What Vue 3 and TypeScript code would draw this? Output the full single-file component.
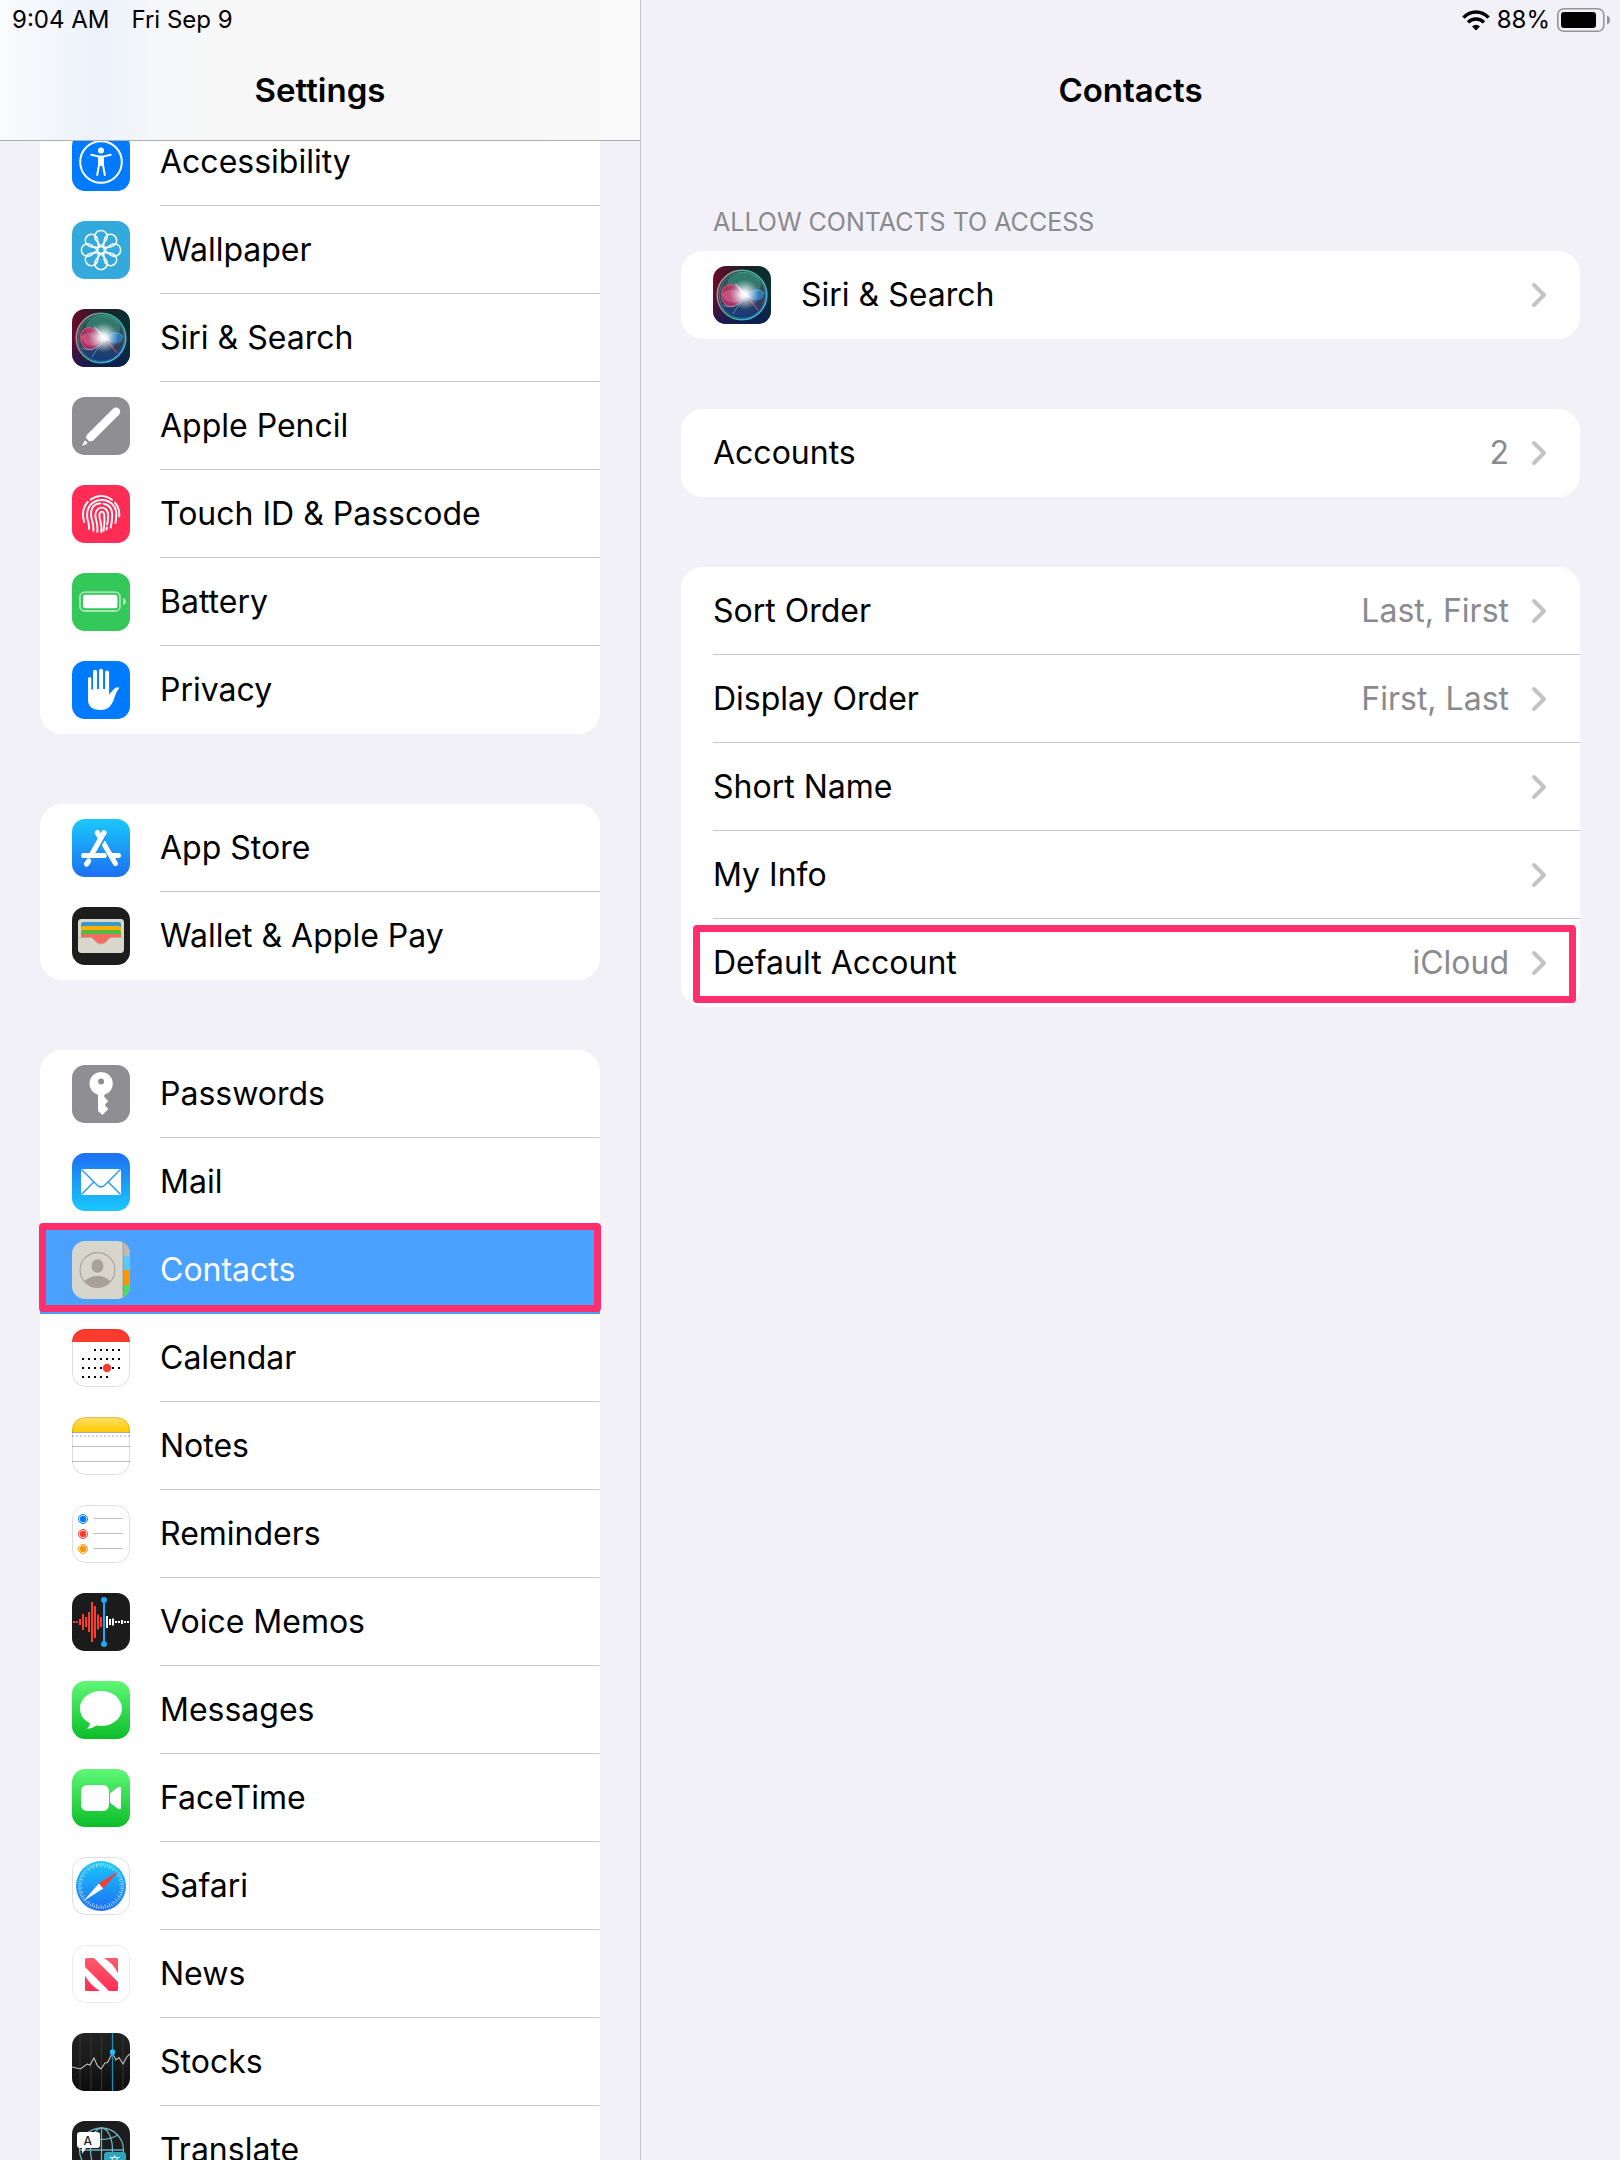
<script setup lang="ts">
interface SidebarItem {
  label: string
  icon: string
  selected?: boolean
}

interface DetailItem {
  label: string
  icon?: string
  value?: string
  marked?: boolean
}

interface DetailGroup {
  title?: string
  items: DetailItem[]
}

const sidebarGroups: SidebarItem[][] = [
  [
    { label: 'Accessibility', icon: 'accessibility' },
    { label: 'Wallpaper', icon: 'wallpaper' },
    { label: 'Siri & Search', icon: 'siri' },
    { label: 'Apple Pencil', icon: 'pencil' },
    { label: 'Touch ID & Passcode', icon: 'touchId' },
    { label: 'Battery', icon: 'battery' },
    { label: 'Privacy', icon: 'privacy' },
  ],
  [
    { label: 'App Store', icon: 'appStore' },
    { label: 'Wallet & Apple Pay', icon: 'wallet' },
  ],
  [
    { label: 'Passwords', icon: 'passwords' },
    { label: 'Mail', icon: 'mail' },
    { label: 'Contacts', icon: 'contacts', selected: true },
    { label: 'Calendar', icon: 'calendar' },
    { label: 'Notes', icon: 'notes' },
    { label: 'Reminders', icon: 'reminders' },
    { label: 'Voice Memos', icon: 'voiceMemos' },
    { label: 'Messages', icon: 'messages' },
    { label: 'FaceTime', icon: 'faceTime' },
    { label: 'Safari', icon: 'safari' },
    { label: 'News', icon: 'news' },
    { label: 'Stocks', icon: 'stocks' },
    { label: 'Translate', icon: 'translate' },
  ],
]

const detailGroups: DetailGroup[] = [
  { title: 'ALLOW CONTACTS TO ACCESS', items: [{ label: 'Siri & Search', icon: 'siri' }] },
  { items: [{ label: 'Accounts', value: '2' }] },
  {
    items: [
      { label: 'Sort Order', value: 'Last, First' },
      { label: 'Display Order', value: 'First, Last' },
      { label: 'Short Name' },
      { label: 'My Info' },
      { label: 'Default Account', value: 'iCloud', marked: true },
    ],
  },
]

const fill = (paint: string): string => `<rect width="58" height="58" fill="${paint}"/>`

const outlined =
  '<rect x=".5" y=".5" width="57" height="57" rx="13" fill="none" stroke="#000" stroke-opacity=".13"/>'

const petals = Array.from(
  { length: 8 },
  (_, i) =>
    `<path d="M29 25.5L24.2 19.5A6.2 6.2 0 1 1 33.8 19.5Z" transform="rotate(${i * 45} 29 29)"/>`,
).join('')

const ticks = Array.from({ length: 60 }, (_, i) => {
  const end = i % 2 ? 8.6 : 10.2
  return `<path d="M29 6V${end}" transform="rotate(${i * 6} 29 29)"/>`
}).join('')

const bar = (x: number, h: number): string =>
  `<rect x="${x - 1}" y="${29 - h / 2}" width="2" height="${h}"/>`

const redBars = [2, 2, 6, 16, 10, 20, 40, 32, 15, 10].map((h, i) => bar(2 + i * 3, h)).join('')
const whiteBars = [12, 6, 7, 2, 2, 4, 2, 2].map((h, i) => bar(35 + i * 3, h)).join('')

const dotRow = (y: number, from: number, to: number): string => {
  let out = ''
  for (let x = from; x <= to; x += 6) out += `<rect x="${x - 1}" y="${y - 1}" width="2" height="2"/>`
  return out
}

const reminder = (y: number, color: string): string =>
  `<circle cx="11" cy="${y}" r="4.5" fill="none" stroke="${color}"/><circle cx="11" cy="${y}" r="3.2" fill="${color}"/><path d="M21.5 ${y - 0.5}H51" stroke="#bdbdbf"/>`

const icons: Record<string, string> = {
  accessibility:
    fill('#007aff') +
    '<circle cx="29" cy="29" r="20.8" fill="none" stroke="#fff" stroke-width="2"/><circle cx="29" cy="17.6" r="3" fill="#fff"/><path d="M19.3 21.8L26 23.4H32L38.7 21.8M27 24.5V32L25.2 42M31 24.5V32L32.8 42" fill="none" stroke="#fff" stroke-width="2" stroke-linecap="round" stroke-linejoin="round"/><path d="M26 23H32V33H26Z" fill="#fff"/>',
  wallpaper:
    fill('#34aadc') +
    `<g fill="none" stroke="#fff" stroke-width="1.5" stroke-linejoin="round">${petals}<circle cx="29" cy="29" r="3.4"/></g>`,
  siri:
    fill('url(#siriBack)') +
    '<rect width="58" height="58" fill="url(#siriLow)"/><circle cx="29" cy="29" r="24.8" fill="url(#siriOrb)"/><ellipse cx="31" cy="19" rx="17" ry="13" fill="#3f9d87" opacity=".5"/><circle cx="29" cy="29" r="24.8" fill="none" stroke="url(#siriRing)" stroke-width="1.5"/><circle cx="29.4" cy="29.4" r="23" fill="none" stroke="#9cc" stroke-opacity=".3"/><path d="M32 29C25 17 12 15 9 25C7 36 14 43 22 40C28 38 30 32 32 29Z" fill="#e02a66" opacity=".68"/><path d="M32 29C25 17 12 15 9 25C7 36 14 43 22 40" fill="none" stroke="#ff5c93" opacity=".8"/><path d="M32 29C24 22 12 23 9 28C13 40 26 39 32 29Z" fill="#ff9fc0" opacity=".3"/><path d="M32 29C38 22 49 22 51 28C50 36 40 37 32 29Z" fill="#2e8be0" opacity=".7"/><path d="M10 39C22 44 28 36 32 29M20 48C24 41 29 34 34 31M34 31C39 22 48 22 51 28" fill="none" stroke="#71c6e8" opacity=".6"/><path d="M34 30L45 44" stroke="#e55d85" stroke-width="1.5" opacity=".5"/><circle cx="31.5" cy="28.5" r="15" fill="url(#siriGlow)"/><path d="M21 16L34 28L39 32L30 30Z" fill="#fff" opacity=".45"/>',
  pencil:
    fill('#8e8e93') +
    '<path d="M44 14.8L19 39.8" stroke="#fff" stroke-width="8.4" stroke-linecap="round"/><path d="M14 41L17.5 44.5L21.5 43.5L15 37Z" fill="#fff"/><path d="M10 49L12.6 43.6Q14.8 44.4 15.6 46.4Z" fill="#fff"/>',
  touchId:
    fill('#ff2d55') +
    '<g fill="none" stroke="#fff" stroke-width="1.9" stroke-linecap="round"><path d="M18.6 14.6Q29 7 40 14.8M15.6 17Q8.6 25 12.2 37M43 17.6Q48 23.5 47.2 31.5"/><path d="M17 44Q17.3 39 15.5 34C11 9 47 9 44.2 32Q44 35 43.5 38"/><path d="M21.3 46C22 40 20 36 19.3 32C18 22 23 18.4 28.4 18.4M31.5 18.7C38 20 40.5 25 40.2 31Q40 38 38.7 42.5"/><path d="M25.3 47C26.2 40 24 36 23.4 31.5C22.5 20 36 19.6 36.2 30.5Q36 36 35.2 39.5M34.9 42.5L34.5 44.5"/><path d="M29.3 47.2C30.3 40 27.8 35 27.4 31C27.2 25.3 32.2 25.6 32.3 30.4Q33 38 31.5 46"/></g>',
  battery:
    fill('#34c759') +
    '<rect x="8" y="19.2" width="40" height="18.8" rx="4.6" fill="none" stroke="#fff" stroke-opacity=".55" stroke-width="1.8"/><rect x="11" y="21.8" width="34.4" height="13.5" rx="2.4" fill="#fff"/><path d="M51 25V32Q54 31 54 28.5T51 25Z" fill="#fff" fill-opacity=".6"/>',
  privacy:
    fill('#007aff') +
    '<path d="M16 39V17.6A1.6 1.6 0 0 1 19.3 17.6V28.5H21V10.8A2 2 0 0 1 25.1 10.8V28H27V9.8A2 2 0 0 1 31.1 9.8V28H33V11.6A2 2 0 0 1 37.1 11.6V33.5L41.5 28.5Q44.5 25.4 47.4 26.8Q44 31 42.6 36C40 45 36 49 28.5 49C20 49 16 45 16 39Z" fill="#fff"/>',
  appStore:
    fill('url(#skyDown)') +
    '<g stroke="#fff" stroke-width="5" stroke-linecap="round" fill="none"><path d="M11.7 36.5H32M41 36.5H46.5M25.4 13.7L43.4 44.6"/></g><path d="M32.2 15.5L19.8 36.5" stroke="#1c94f8" stroke-width="7"/><path d="M12 36.5H32" stroke="#fff" stroke-width="5" stroke-linecap="round"/><path d="M32 13.7L20.3 34.2M16.6 42L14.6 45" stroke="#fff" stroke-width="5.2" stroke-linecap="round"/><path d="M25.4 13.7L28.5 19" stroke="#fff" stroke-width="5" stroke-linecap="round"/>',
  wallet:
    fill('#1d1d1d') +
    '<rect x="6" y="12" width="46" height="34" rx="3.4" fill="#d9d7cc"/><path d="M9 17.5Q9 15 11.5 15H46.5Q49 15 49 17.5V22H9Z" fill="#3a99c9"/><path d="M9 21.5Q9 19 11.5 19H46.5Q49 19 49 21.5V26H9Z" fill="#ffb000"/><path d="M9 25.5Q9 23 11.5 23H46.5Q49 23 49 25.5V30H9Z" fill="#53bb41"/><path d="M9 29.5Q9 27 11.5 27H46.5Q49 27 49 29.5V31H39C36 31 35 37 29 37S22 31 19 31H9Z" fill="#f26d5f"/><path d="M6 30.6H19C22 30.6 23 37 29 37S36 30.6 39 30.6H52" fill="none" stroke="#bbb9ae" stroke-width=".8"/>',
  passwords:
    fill('#8e8e93') +
    '<path d="M29.2 7A11.6 11.6 0 0 1 32.3 29.8V32L36.3 36L32.8 40L36.3 44L30.3 50L26 46V29.8A11.6 11.6 0 0 1 29.2 7Z" fill="#fff"/><circle cx="29.1" cy="16.6" r="3" fill="#8e8e93"/>',
  mail:
    fill('url(#skyUp)') +
    '<rect x="9" y="16" width="40" height="26" rx="1" fill="#fff"/><path d="M9.5 16.5L25.3 32.3Q29 35.6 32.7 32.3L48.5 16.5M9.5 41.5L21.8 29M48.5 41.5L36.2 29" fill="none" stroke="#2a98f4" stroke-width="1.4"/>',
  contacts:
    fill('#d8d6cc') +
    '<rect x="51" width="7" height="15" fill="#bcb9b0"/><rect x="51" y="15" width="7" height="14" fill="#5ac8fa"/><rect x="51" y="29" width="7" height="15" fill="#ff9500"/><rect x="51" y="44" width="7" height="14" fill="#4cd964"/><path d="M51 0V58" stroke="#8c887e" stroke-opacity=".6"/><circle cx="25.5" cy="29" r="17.4" fill="none" stroke="#a8a198" stroke-width="1.1"/><ellipse cx="25.5" cy="25" rx="6" ry="6.8" fill="#a8a198"/><path d="M12.5 40.5Q17 35 25.5 35T38.5 40.5A17.4 17.4 0 0 1 12.5 40.5Z" fill="#a8a198"/>',
  calendar:
    fill('#fff') +
    `<rect width="58" height="13" fill="#ff3b30"/>${dotRow(21, 23, 47)}${dotRow(30, 11, 47)}${dotRow(39, 11, 47)}${dotRow(48, 11, 35)}<circle cx="35" cy="39" r="4.2" fill="#ff3b30"/>${outlined}`,
  notes:
    fill('#fff') +
    '<rect width="58" height="15" fill="url(#noteTop)"/><path d="M0 15.5H58" stroke="#a6a6a6"/><path d="M0 19H58" stroke="#d0d0d0" stroke-width="2" stroke-dasharray="2 2"/><path d="M0 29.5H58M0 44.5H58" stroke="#bdbdbf"/>' +
    outlined,
  reminders:
    fill('#fff') + reminder(14, '#007aff') + reminder(29, '#ff3b30') + reminder(44, '#ff9500') + outlined,
  voiceMemos:
    fill('#1b1b1b') +
    `<g fill="#ff3b30">${redBars}</g><g fill="#fff">${whiteBars}</g><g fill="#1ea7fd"><rect x="31" y="7" width="2" height="44"/><circle cx="32" cy="7" r="3"/><circle cx="32" cy="51" r="3"/></g>`,
  messages:
    fill('url(#greenDown)') +
    '<path d="M29 10C40.6 10 50 17.8 50 27.5S40.6 45 29 45Q26.5 45 24.3 44.6Q20 48 15 47.8Q18 45.5 18 42.3C11.8 39.3 8 33.8 8 27.5C8 17.8 17.4 10 29 10Z" fill="#fff"/>',
  faceTime:
    fill('url(#greenDown)') +
    '<rect x="9" y="16" width="28" height="26" rx="5.8" fill="#fff"/><path d="M38 25.5Q38 24.5 39 23.5L46 18.3Q49 16.8 49 19.5V38.5Q49 41.2 46 39.7L39 34.5Q38 33.5 38 32.5Z" fill="#fff"/>',
  safari:
    fill('#fff') +
    `<circle cx="29" cy="29" r="25" fill="url(#skyDown)"/><g stroke="#fff" stroke-opacity=".75" stroke-width=".8">${ticks}</g><path d="M46.5 14L26.8 26.5L31.2 31.5Z" fill="#ff3b30"/><path d="M11.5 44L26.8 26.5L31.2 31.5Z" fill="#fff"/>${outlined}`,
  news:
    fill('#fff') +
    '<path d="M14 13H22L46 37V45L45 46H37L13 22V14ZM32 13H45L46 14V28.5Q42 19 32 13ZM13 30.5Q18 40 28 46H14L13 45Z" fill="url(#newsRed)"/><rect x=".5" y=".5" width="57" height="57" rx="13" fill="none" stroke="#000" stroke-opacity=".08"/>',
  stocks:
    fill('url(#stockBack)') +
    '<path d="M8 0V58M19 0V58M29.5 0V58M51 0V58" stroke="#343434"/><path d="M0 34L8.5 36L15 31L18 32L22 25L25.5 33L29 36L33 30L35.5 29.5L40.5 20L44 27L47 24.5L51 31L55 23.5L58 21" fill="none" stroke="#c4c4c4" stroke-width="1.1"/><path d="M40.5 0V58" stroke="#1b8dbd" stroke-width="1.3"/><circle cx="40.5" cy="19" r="2.7" fill="#22c3ff"/>',
  translate:
    fill('#1d1d1d') +
    '<g fill="none" stroke="#6ab4c1" stroke-width="1.3"><circle cx="29.5" cy="29" r="22"/><ellipse cx="29.5" cy="29" rx="11" ry="22"/><path d="M29.5 7V51M7.5 29H51.5M13 14Q29.5 23 46 14M13 44Q29.5 35 46 44"/></g><path d="M8 11H25Q28 11 28 14V24Q28 27 25 27H14L10 33V27H8Q5 27 5 24V14Q5 11 8 11Z" fill="#fff"/><text x="15.8" y="23.5" font-size="12" font-weight="500" text-anchor="middle" fill="#1d1d1d">A</text><path d="M35 31H51Q54 31 54 34V44Q54 47 51 47H49V52L44 47H35Q32 47 32 44V34Q32 31 35 31Z" fill="#2ca6bd"/><text x="42.5" y="43.5" font-size="11" text-anchor="middle" fill="#fff">文</text>',
}
</script>

<template>
  <div class="screen">
    <svg class="paints" width="0" height="0" aria-hidden="true">
      <defs>
        <linearGradient id="skyDown" x2="0" y2="1"><stop stop-color="#1ac8fc" /><stop offset="1" stop-color="#1d6ff2" /></linearGradient>
        <linearGradient id="skyUp" x2="0" y2="1"><stop stop-color="#1d6ff2" /><stop offset="1" stop-color="#1ac8fc" /></linearGradient>
        <linearGradient id="greenDown" x2="0" y2="1"><stop stop-color="#5ff777" /><stop offset="1" stop-color="#0bbd29" /></linearGradient>
        <linearGradient id="noteTop" x2="0" y2="1"><stop stop-color="#ffdf67" /><stop offset="1" stop-color="#fecb00" /></linearGradient>
        <linearGradient id="newsRed" x2="0" y2="1"><stop stop-color="#fd5b6c" /><stop offset="1" stop-color="#ff2d55" /></linearGradient>
        <linearGradient id="stockBack" x2="0" y2="1"><stop stop-color="#222" /><stop offset=".6" stop-color="#181818" /><stop offset="1" stop-color="#0c0c0c" /></linearGradient>
        <linearGradient id="siriBack"><stop stop-color="#6d0a2b" /><stop offset=".5" stop-color="#1c2029" /><stop offset="1" stop-color="#06322f" /></linearGradient>
        <linearGradient id="siriLow" x2="0" y2="1"><stop offset=".5" stop-color="#0a1d5c" stop-opacity="0" /><stop offset="1" stop-color="#0a1d5c" stop-opacity=".8" /></linearGradient>
        <linearGradient id="siriOrb" x2="0" y2="1"><stop stop-color="#1c5c50" /><stop offset=".55" stop-color="#3b4356" /><stop offset="1" stop-color="#0d3a82" /></linearGradient>
        <linearGradient id="siriRing" x2="1" y2=".4"><stop stop-color="#e07f96" /><stop offset=".6" stop-color="#2fb791" /><stop offset="1" stop-color="#3fb4e6" /></linearGradient>
        <radialGradient id="siriGlow"><stop stop-color="#fff" /><stop offset=".25" stop-color="#fff" stop-opacity=".85" /><stop offset="1" stop-color="#cfe8f5" stop-opacity="0" /></radialGradient>
      </defs>
    </svg>

    <aside class="sidebar">
      <header class="bar sidebar-bar">
        <div class="status">
          <time>9:04 AM</time>
          <span>Fri Sep 9</span>
        </div>
        <h1>Settings</h1>
      </header>
      <nav class="sidebar-list" aria-label="Settings">
        <ul v-for="(group, g) in sidebarGroups" :key="g" class="card">
          <li v-for="item in group" :key="item.label">
            <a
              href="#"
              class="row"
              :class="{ selected: item.selected }"
              :aria-current="item.selected ? 'page' : undefined"
            >
              <svg class="icon" viewBox="0 0 58 58" aria-hidden="true" v-html="icons[item.icon]" />
              <span class="cell">{{ item.label }}</span>
              <span v-if="item.selected" class="mark" />
            </a>
          </li>
        </ul>
      </nav>
    </aside>

    <main class="detail">
      <header class="bar">
        <div class="status status-right">
          <svg width="28" height="21" viewBox="0 0 28 21" aria-hidden="true">
            <g fill="none" stroke="#000" stroke-width="3.4">
              <path d="M1.4 7.6Q7 2 14 2T26.6 7.6" />
              <path d="M6 12.4Q9.3 9 14 9T22 12.4" />
            </g>
            <path d="M10 16.4Q14 13 18 16.4L14 20.5Z" />
          </svg>
          <span>88%</span>
          <svg width="54" height="24" viewBox="0 0 54 24" aria-hidden="true">
            <rect x=".8" y=".8" width="46" height="22.4" rx="6" fill="none" stroke="#959499" stroke-width="1.6" />
            <rect x="4" y="4" width="35" height="16" rx="3" />
            <path d="M50 7.5V16.5Q53 15.5 53 12T50 7.5Z" fill="#959499" />
          </svg>
        </div>
        <h1>Contacts</h1>
      </header>
      <section v-for="(group, g) in detailGroups" :key="g" class="group">
        <h2 v-if="group.title">{{ group.title }}</h2>
        <ul class="card">
          <li v-for="item in group.items" :key="item.label">
            <a href="#" class="row">
              <svg v-if="item.icon" class="icon" viewBox="0 0 58 58" aria-hidden="true" v-html="icons[item.icon]" />
              <span class="cell">
                <span>{{ item.label }}</span>
                <span class="value">{{ item.value }}</span>
                <svg class="chevron" width="16" height="26" viewBox="0 0 16 26" aria-hidden="true">
                  <path d="M3 3L13 13L3 23" fill="none" stroke="#c4c4c7" stroke-width="4" stroke-linecap="round" stroke-linejoin="round" />
                </svg>
              </span>
              <span v-if="item.marked" class="mark mark-inner" />
            </a>
          </li>
        </ul>
      </section>
    </main>
  </div>
</template>

<style>
body {
  background: #f2f1f7;
}
</style>

<style scoped>
.screen {
  display: grid;
  grid-template-columns: 641px minmax(0, 1fr);
  height: 100vh;
  overflow: hidden;
  background: #f2f1f7;
  color: #000;
  font-family: Inter, 'Noto Sans CJK SC', sans-serif;
  font-size: 32px;
  line-height: 40px;
}

.paints {
  position: absolute;
}

.sidebar {
  display: flex;
  flex-direction: column;
  min-height: 0;
  border-right: 1px solid #c6c5ca;
}

.bar {
  box-sizing: border-box;
  flex: none;
  height: 141px;
}

.sidebar-bar {
  position: relative;
  z-index: 1;
  border-bottom: 1px solid #adacb1;
  background: linear-gradient(90deg, #fafbfd 0, #ecf2fb 100px, #f6f7f9 160px, #f7f7f7 240px, #f7f7f7 500px, #fafafa 640px);
}

.status {
  display: flex;
  align-items: center;
  gap: 22px;
  height: 40px;
  padding: 0 12px;
  font-size: 24px;
  line-height: 40px;
}

.status-right {
  justify-content: flex-end;
  gap: 7px;
  padding: 0 9px;
}

h1 {
  margin: 0;
  padding-top: 30px;
  font-size: 33px;
  font-weight: 600;
  line-height: 40px;
  text-align: center;
}

.sidebar-list {
  display: flex;
  flex: 1;
  flex-direction: column;
  gap: 70px;
  min-height: 0;
  margin-top: -23px;
  padding: 0 40px;
  overflow-y: auto;
  scrollbar-width: none;
}

.card {
  flex: none;
  margin: 0;
  padding: 0;
  border-radius: 22px;
  background: #fff;
  list-style: none;
}

.sidebar-list .card:first-child {
  border-top-left-radius: 0;
  border-top-right-radius: 0;
}

.row {
  position: relative;
  display: flex;
  align-items: center;
  height: 88px;
  padding-left: 32px;
  color: inherit;
  text-decoration: none;
}

.icon {
  flex: none;
  width: 58px;
  height: 58px;
  margin-right: 30px;
  border-radius: 13px;
  overflow: hidden;
}

.cell {
  box-sizing: border-box;
  display: flex;
  flex: 1;
  align-items: center;
  height: 88px;
  border-bottom: 1px solid #c6c6c8;
}

li:last-child .cell,
.selected .cell {
  border-bottom-color: transparent;
}

.selected {
  background: #4ba1ff;
  color: #fff;
}

.mark {
  position: absolute;
  inset: -3px -1px 2px;
  border: 7px solid #ff2f6d;
  border-radius: 4px;
}

.mark-inner {
  inset: 6px 4px 4px 12px;
}

.detail {
  min-height: 0;
  overflow-y: auto;
  scrollbar-width: none;
}

.group {
  padding: 0 40px 70px;
}

h2 {
  margin: 0;
  padding: 66px 32px 14px;
  color: #8a8a8e;
  font-size: 25px;
  font-weight: 400;
  line-height: 30px;
}

.value {
  margin-left: auto;
  color: #8a8a8e;
}

.chevron {
  flex: none;
  margin: 0 33px 0 22px;
}
</style>
